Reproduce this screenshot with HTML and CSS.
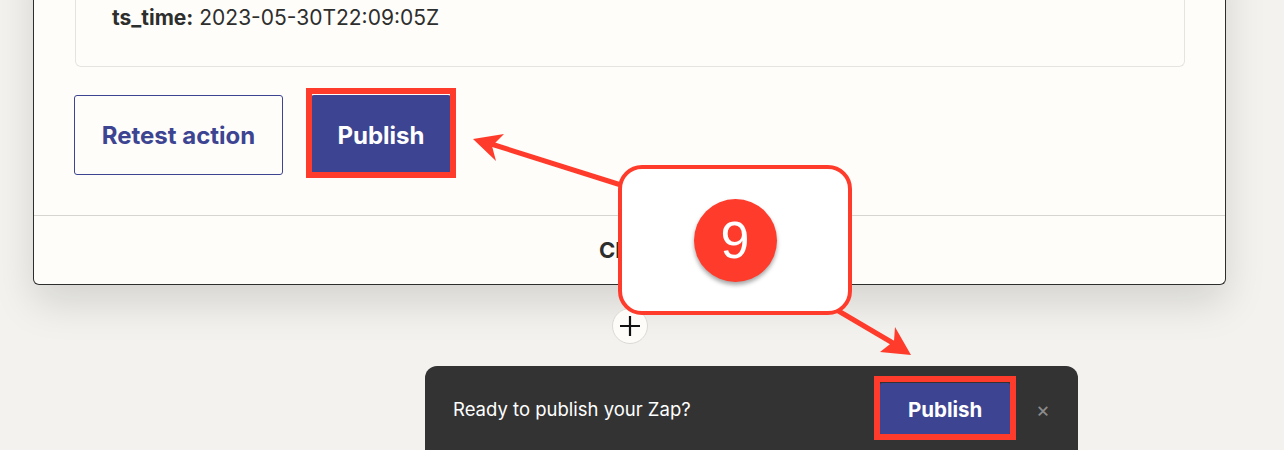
FILE: index.html
```html
<!DOCTYPE html>
<html>
  <head>
    <title>Publish your Zap</title>
    <meta name="viewport" content="width=device-width, initial-scale=1">
    <link rel="stylesheet" href="styles.css">
  </head>
  <body>
    <div class="page">
      <div class="modal">
        <div class="modal-body">
          <div class="output-card">
            <div class="output-row"><b>ts_time:</b> 2023-05-30T22:09:05Z</div>
          </div>
          <div class="actions">
            <button class="btn btn-outline">Retest action</button>
            <button class="btn btn-primary">Publish</button>
          </div>
        </div>
        <div class="modal-footer">Close</div>
      </div>

      <div class="add-step">
        <span class="add-circle">
          <svg width="22" height="22" viewBox="0 0 22 22"><path d="M11 1v20M1 11h20" stroke="#111" stroke-width="2.2"/></svg>
        </span>
      </div>

      <div class="toast">
        <span class="toast-text">Ready to publish your Zap?</span>
        <button class="btn btn-primary btn-small">Publish</button>
        <span class="toast-close">&times;</span>
      </div>

      <!-- annotation overlay -->
      <svg class="marks" width="1284" height="450" viewBox="0 0 1284 450">
        <rect x="309" y="91" width="144" height="84" fill="none" stroke="#ff3b2b" stroke-width="6"/>
        <rect x="877" y="379" width="136" height="58" fill="none" stroke="#ff3b2b" stroke-width="6"/>
        <path d="M640 191 L488 143" stroke="#ff3b2b" stroke-width="5" fill="none"/>
        <polygon points="473,139 504,134 492,146 496,161" fill="#ff3b2b"/>
        <path d="M830 306 L898 346" stroke="#ff3b2b" stroke-width="5" fill="none"/>
        <polygon points="911,355 895,327 894,341 880,352" fill="#ff3b2b"/>
      </svg>

      <div class="callout">
        <span class="step-badge">9</span>
      </div>
    </div>
  </body>
</html>
```

FILE: styles.css
```css
body {
  margin: 0;
  background-color: #f3f2ee;
  font-family: Inter, "Liberation Sans", sans-serif;
  color: #2d2e2e;
  overflow: hidden;
}

.page {
  position: relative;
  width: 1284px;
  height: 450px;
  overflow: hidden;
}

.modal {
  margin: -60px 0 0 33px;
  width: 1191px;
  background-color: #fffdf9;
  border: 1px solid #2d2e2e;
  border-top: none;
  border-radius: 0 0 6px 6px;
  box-shadow: 0 18px 40px rgba(0, 0, 0, 0.13);
}

.modal-body {
  padding: 0 40px 40px 40px;
  border-bottom: 1px solid #d7d5d0;
}

.output-card {
  border: 1px solid #e6e4df;
  border-top: none;
  border-radius: 0 0 6px 6px;
  padding: 64px 36px 34px 36px;
  margin-left: 1px;
}

.output-row {
  font-size: 21px;
  line-height: 28px;
}

.output-row b {
  font-weight: 700;
}

.actions {
  display: flex;
  gap: 28px;
  margin-top: 28px;
}

.btn {
  font-family: Inter, "Liberation Sans", sans-serif;
  font-size: 24px;
  font-weight: 700;
  border-radius: 3px;
  cursor: pointer;
}

.btn-outline {
  width: 209px;
  height: 80px;
  background-color: #fffdf9;
  color: #3d4592;
  border: 1px solid #3d4592;
}

.btn-primary {
  width: 140px;
  height: 80px;
  background-color: #3d4592;
  color: #fff;
  border: none;
}

.modal-footer {
  height: 68px;
  display: flex;
  align-items: center;
  justify-content: center;
  font-size: 22px;
  font-weight: 700;
}

.add-step {
  width: 1193px;
  margin-left: 33px;
  display: flex;
  justify-content: center;
  margin-top: 23px;
}

.add-circle {
  width: 34px;
  height: 34px;
  border-radius: 50%;
  background-color: #fdfcf9;
  border: 1px solid #dcdad5;
  display: flex;
  align-items: center;
  justify-content: center;
}

.toast {
  margin: 22px 0 0 425px;
  width: 653px;
  height: 86px;
  background-color: #333333;
  border-radius: 12px 12px 0 0;
  display: flex;
  align-items: center;
  padding: 0 28px;
  box-sizing: border-box;
}

.toast-text {
  color: #fff;
  font-size: 18.5px;
  flex: 1;
}

.btn-small {
  width: 130px;
  height: 52px;
  font-size: 20.5px;
  border-radius: 2px;
}

.toast-close {
  color: #8c8c8c;
  font-size: 21px;
  margin-left: 26px;
  margin-right: 0;
}

/* annotations */
.marks {
  position: absolute;
  left: 0;
  top: 0;
  pointer-events: none;
}

.callout {
  position: absolute;
  left: 618px;
  top: 165px;
  width: 226px;
  height: 142px;
  background-color: #fff;
  border: 4px solid #ff3b2b;
  border-radius: 24px;
  display: flex;
  align-items: center;
  justify-content: center;
}

.step-badge {
  width: 83px;
  height: 83px;
  border-radius: 50%;
  background-color: #ff3b2b;
  color: #fff;
  font-family: "Liberation Sans", Arial, sans-serif;
  font-size: 52px;
  display: flex;
  align-items: center;
  justify-content: center;
  box-shadow: 0 3px 4px rgba(0, 0, 0, 0.35);
}
```
